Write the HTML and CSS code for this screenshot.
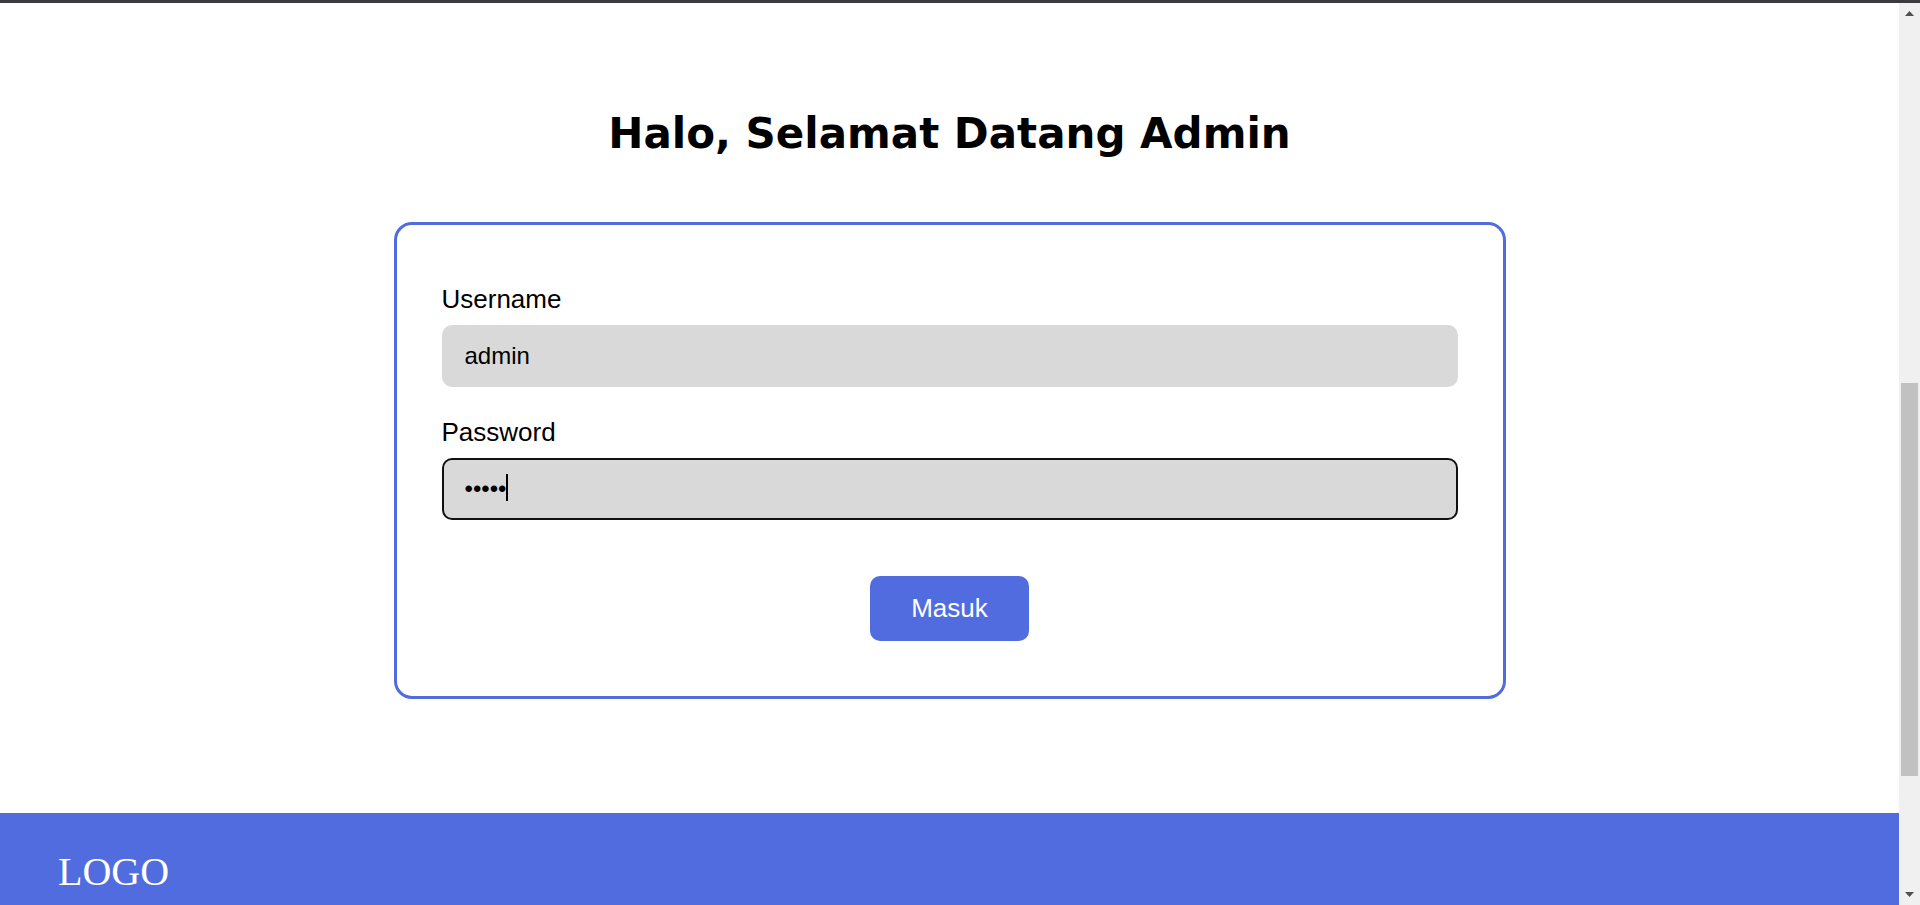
FILE: index.html
```html
<!DOCTYPE html>
<html lang="id">
<head>
<meta charset="utf-8">
<title>Login Admin</title>
<link rel="stylesheet" href="styles.css">
</head>
<body>
<div class="topbar"></div>
<div class="window">
  <div class="page">
    <main class="content">
      <h1 class="title">Halo, Selamat Datang Admin</h1>
      <form class="card">
        <label class="label" for="username">Username</label>
        <input class="field" id="username" type="text" value="admin">
        <label class="label label-second" for="password">Password</label>
        <div class="field-wrap">
          <input class="field field-focus" id="password" type="password" value="admin">
          <span class="caret"></span>
        </div>
        <div class="actions">
          <button class="btn" type="button">Masuk</button>
        </div>
      </form>
    </main>
    <footer class="footer">
      <div class="logo">LOGO</div>
    </footer>
  </div>
  <div class="scrollbar">
    <div class="sb-btn">
      <svg width="9" height="5" viewBox="0 0 9 5"><polygon points="4.5,0 9,5 0,5" fill="#505050"/></svg>
    </div>
    <div class="sb-track"><div class="sb-thumb"></div></div>
    <div class="sb-btn">
      <svg width="9" height="5" viewBox="0 0 9 5"><polygon points="0,0 9,0 4.5,5" fill="#505050"/></svg>
    </div>
  </div>
</div>
</body>
</html>
```
FILE: styles.css
```css
* { box-sizing: border-box; }
html, body {
  margin: 0;
  padding: 0;
  height: 905px;
  overflow: hidden;
  background: #ffffff;
}
body {
  font-family: "Liberation Sans", Arial, sans-serif;
  color: #000;
}
.topbar {
  height: 3px;
  background: #3a3b3e;
}
.window {
  display: flex;
  height: 902px;
}
.page {
  flex: 1;
  display: flex;
  flex-direction: column;
  overflow: hidden;
}
.content {
  padding-top: 107px;
  display: flex;
  flex-direction: column;
  align-items: center;
}
.title {
  margin: 0;
  font-family: "DejaVu Sans", sans-serif;
  font-weight: bold;
  font-size: 42px;
  line-height: 48px;
  text-align: center;
}
.card {
  margin-top: 64px;
  width: 1112px;
  border: 3px solid #516cdf;
  border-radius: 18px;
  padding: 59px 45px 55px 45px;
  display: flex;
  flex-direction: column;
}
.label {
  font-family: "Liberation Sans", Arial, sans-serif;
  font-size: 26px;
  line-height: 30px;
  display: block;
}
.label-second { margin-top: 30px; }
.field {
  margin-top: 11px;
  display: block;
  width: 100%;
  height: 62px;
  border: 2px solid transparent;
  border-radius: 10px;
  background: #d9d9d9;
  padding: 0 21px;
  font-family: "Liberation Sans", Arial, sans-serif;
  font-size: 24px;
  color: #000;
  outline: none;
}
.field-wrap {
  position: relative;
  margin-top: 11px;
}
.field-wrap .field { margin-top: 0; }
.field-focus { border-color: #111; }
.caret {
  position: absolute;
  left: 64px;
  top: 16px;
  width: 2px;
  height: 27px;
  background: #000;
}
.actions {
  margin-top: 56px;
  display: flex;
  justify-content: center;
}
.btn {
  width: 159px;
  height: 65px;
  border: none;
  border-radius: 10px;
  background: #516cdf;
  color: #fff;
  font-family: "Liberation Sans", Arial, sans-serif;
  font-size: 26px;
  padding: 0;
}
.footer {
  margin-top: 114px;
  flex: 1;
  background: #516cdf;
  padding: 36px 58px 0;
}
.logo {
  font-family: "Liberation Serif", "Times New Roman", serif;
  font-size: 40px;
  line-height: 46px;
  color: #fff;
}
.scrollbar {
  width: 21px;
  background: #f0f0f0;
  display: flex;
  flex-direction: column;
}
.sb-btn {
  height: 21px;
  display: flex;
  align-items: center;
  justify-content: center;
}
.sb-track {
  flex: 1;
  padding-top: 359px;
  display: flex;
  flex-direction: column;
  align-items: center;
}
.sb-thumb {
  width: 17px;
  height: 393px;
  background: #c1c1c1;
}
```
